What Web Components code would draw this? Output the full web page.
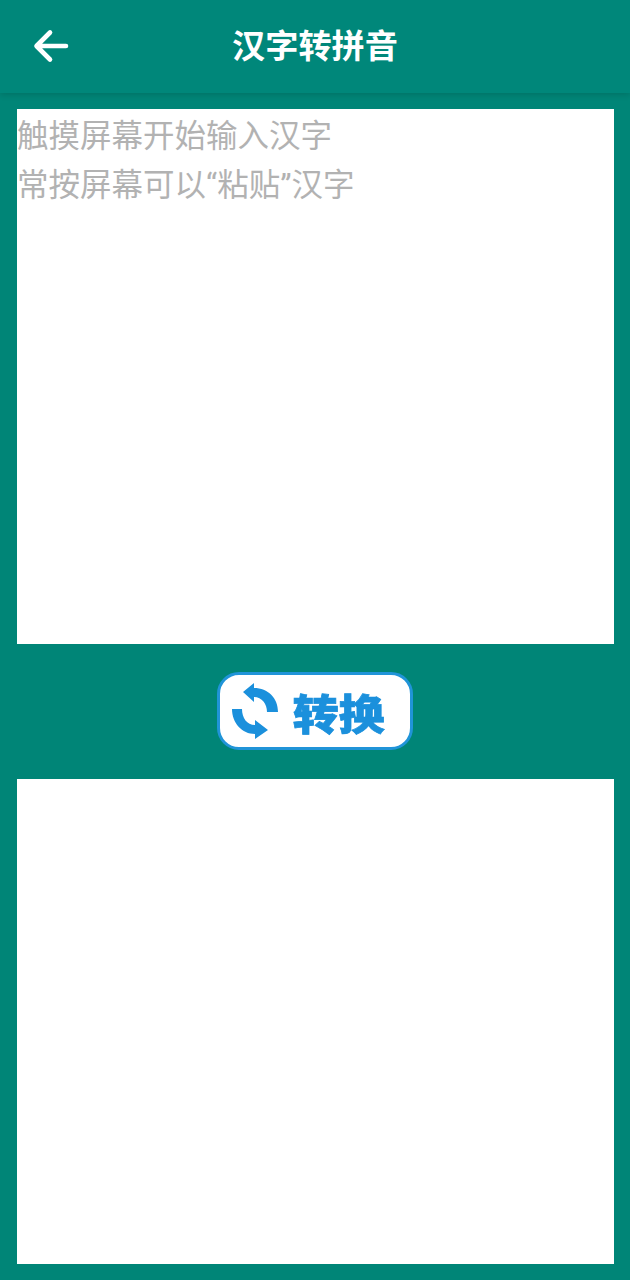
<!DOCTYPE html>
<html lang="zh">
<head>
<meta charset="utf-8">
<title>汉字转拼音</title>
<style>
html, body { margin: 0; height: 100%; background: #008577; }
body { font-family: Roboto, "Noto Sans CJK SC", sans-serif; }
</style>
</head>
<body>
<app-screen>
    <title-bar slot="bar">汉字转拼音</title-bar>
    <text-panel slot="input" height="535" placeholder="触摸屏幕开始输入汉字&#10;常按屏幕可以“粘贴”汉字"></text-panel>
    <convert-button slot="action">转换</convert-button>
    <text-panel slot="output" height="485"></text-panel>
</app-screen>

<script>
class AppScreen extends HTMLElement {
    constructor() {
        super();
        this.attachShadow({ mode: 'open' });
        this.shadowRoot.innerHTML = `
        <style>
        :host { display: flex; flex-direction: column; width: 630px; height: 1280px; background: #008577; }
        .content { display: flex; flex-direction: column; padding: 16px 16.5px 0 17px; }
        .action { display: flex; justify-content: center; padding: 28px 0 29px 0; }
        </style>
        <slot name="bar"></slot>
        <div class="content">
            <slot name="input"></slot>
            <div class="action"><slot name="action"></slot></div>
            <slot name="output"></slot>
        </div>
        `;
    }
}

class TitleBar extends HTMLElement {
    constructor() {
        super();
        this.attachShadow({ mode: 'open' });
        this.shadowRoot.innerHTML = `
        <style>
        :host {
            display: flex;
            align-items: center;
            justify-content: center;
            position: relative;
            height: 93px;
            box-sizing: border-box;
            background: #00877a;
            box-shadow: 0 2px 6px rgba(0, 0, 0, 0.14);
            color: #fff;
            font-size: 33.2px;
            font-weight: 700;
        }
        .back { position: absolute; left: 33px; top: 29px; width: 36px; height: 34px; }
        .label { line-height: 93px; height: 93px; }
        </style>
        <svg class="back" viewBox="0 0 36 34" fill="none" stroke="#fff" stroke-width="4.6" stroke-linecap="round" stroke-linejoin="round">
            <path d="M33 17H4M17 3.5L3.5 17L17 30.5"/>
        </svg>
        <span class="label"><slot></slot></span>
        `;
    }
}

class TextPanel extends HTMLElement {
    constructor() {
        super();
        this.attachShadow({ mode: 'open' });
        this.shadowRoot.innerHTML = `
        <style>
        :host { display: block; background: #fff; box-sizing: border-box; }
        .hint { color: #b2b2b2; font-size: 31.5px; line-height: 49px; white-space: pre-line; padding-top: 3px; }
        </style>
        <div class="hint"></div>
        `;
    }

    connectedCallback() {
        this.style.height = this.getAttribute('height') + 'px';
        this.shadowRoot.querySelector('.hint').textContent = this.getAttribute('placeholder') || '';
    }
}

class ConvertButton extends HTMLElement {
    constructor() {
        super();
        this.attachShadow({ mode: 'open' });
        this.shadowRoot.innerHTML = `
        <style>
        :host {
            display: flex;
            align-items: center;
            width: 196px;
            height: 78px;
            box-sizing: border-box;
            background: #fff;
            border: 3.5px solid #2094d8;
            border-radius: 22px;
            color: #1b90dc;
            font-size: 46px;
            font-weight: 900;
        }
        svg { width: 50px; height: 60px; margin-left: 10.5px; flex: none; }
        .label {
            margin-left: 12px;
            line-height: 75px;
            height: 71px;
            white-space: nowrap;
            -webkit-text-stroke: 0.8px #1b90dc;
            filter: blur(0.4px);
            transform: scaleY(0.92);
            transform-origin: 50% 62px;
        }
        </style>
        <svg viewBox="0 0 50 60" fill="#1b90dc">
            <path d="M12 11L23 2V7C37 7 47 17 47 31H36C36 23 31 16 23 16V21Z"/>
            <path d="M37 49L24 39V44C16 44 11 37 11 28H1C1 42 11 53 24 53V58Z"/>
        </svg>
        <span class="label"><slot></slot></span>
        `;
    }
}

customElements.define('app-screen', AppScreen);
customElements.define('title-bar', TitleBar);
customElements.define('text-panel', TextPanel);
customElements.define('convert-button', ConvertButton);
</script>
</body>
</html>
